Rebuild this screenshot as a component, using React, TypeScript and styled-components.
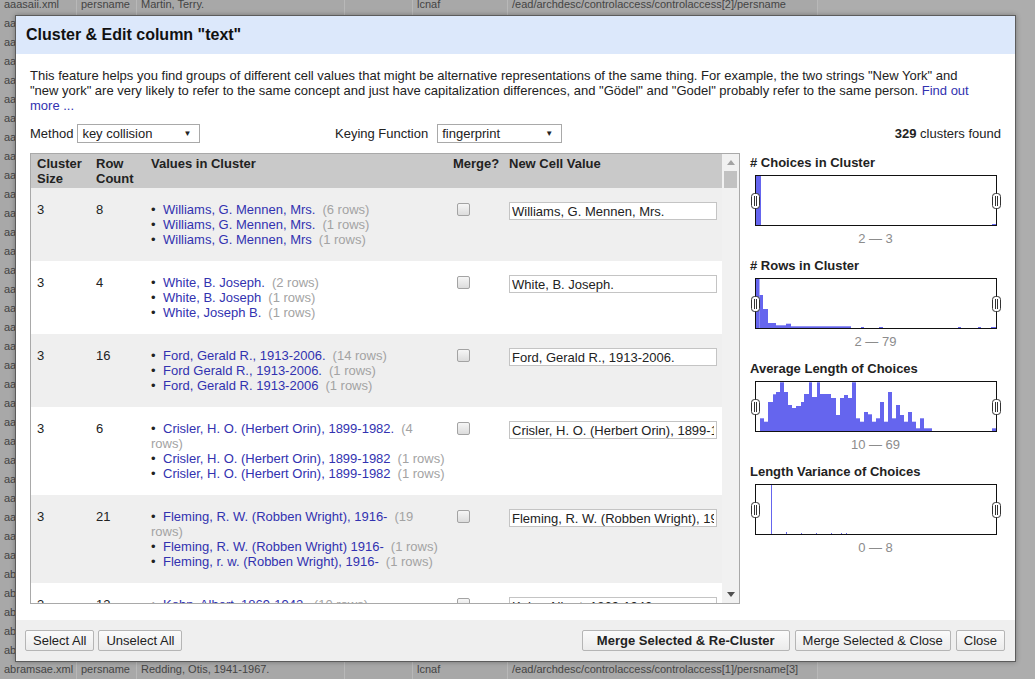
import React from 'react'
import styled, { createGlobalStyle } from 'styled-components'

const GlobalStyle = createGlobalStyle`
  body {
    margin: 0;
    font-family: "Liberation Sans", Arial, sans-serif;
    font-size: 13px;
  }
`

// ---- background grid behind the dialog ----

const bgPrefixes = [
  'aaasaii', 'aacraig', 'aaschen', 'aacoles', 'aatkins', 'aatwood',
  ...Array.from({ length: 20 }, (_, i) => 'aapitt' + (i + 1)),
  'aaspen', 'aasmith', 'aatley', 'aatrim', 'abelsm', 'abelson', 'abers', 'abeyta', 'abrams',
]

const bgRows = [
  ...bgPrefixes.map((p, i) => ({
    file: p + '.xml',
    tag: 'persname',
    name: i === 0 ? 'Martin, Terry.' : '',
    src: 'lcnaf',
    path: '/ead/archdesc/controlaccess/controlaccess[2]/persname',
  })),
  {
    file: 'abramsae.xml',
    tag: 'persname',
    name: 'Redding, Otis, 1941-1967.',
    src: 'lcnaf',
    path: '/ead/archdesc/controlaccess/controlaccess[1]/persname[3]',
  },
]

const Page = styled.div`
  position: relative;
  width: 1035px;
  height: 679px;
  overflow: hidden;
  background: #adadad;
`

const BgTable = styled.div`
  margin-top: -5px;
`

const BgRow = styled.div`
  display: grid;
  grid-template-columns: 77px 60px 208px 68px 95px 310px 1fr;
  height: 19px;
  line-height: 19px;
  font-size: 11px;
  color: #444;
`

const BgCell = styled.div<{ $blank?: boolean }>`
  padding-left: 4px;
  white-space: nowrap;
  overflow: hidden;
  background: ${(p) => (p.$blank ? 'transparent' : '#a8a8a8')};
  border-right: ${(p) => (p.$blank ? 'none' : '1px solid #b8b8b8')};
`

// ---- dialog ----

const Dialog = styled.div`
  position: absolute;
  left: 15px;
  top: 15px;
  width: 1001px;
  height: 647px;
  box-sizing: border-box;
  border: 1px solid #5c5c5c;
  background: #fff;
  display: flex;
  flex-direction: column;
  box-shadow: 0 0 5px rgba(0, 0, 0, 0.3);
  color: #222;
`

const TitleBar = styled.div`
  height: 38px;
  flex-shrink: 0;
  display: flex;
  align-items: center;
  padding-left: 10px;
  background: #dce8fb;
  font-size: 16px;
  font-weight: bold;
  color: #111;
`

const Body = styled.div`
  flex: 1;
  min-height: 0;
  display: flex;
  flex-direction: column;
  padding: 14px 14px 16px;
`

const Description = styled.p`
  margin: 0 13px 0 0;
  line-height: 15px;
`

const Link = styled.a`
  color: #3232b0;
  text-decoration: none;
  cursor: pointer;
`

const Controls = styled.div`
  margin-top: 11px;
  height: 19px;
  display: flex;
  align-items: center;
`

const ControlGroup = styled.div<{ $width?: number; $gap: number }>`
  display: flex;
  align-items: center;
  gap: ${(p) => p.$gap}px;
  width: ${(p) => (p.$width ? p.$width + 'px' : 'auto')};
`

const SelectBox = styled.div<{ $width: number }>`
  position: relative;
  width: ${(p) => p.$width}px;
  height: 19px;
  box-sizing: border-box;
  border: 1px solid #a9a9a9;
  background: #fff;
  display: flex;
  align-items: center;
  padding-left: 4px;
`

const SelectArrow = styled.span`
  position: absolute;
  right: 8px;
  top: 4px;
  font-size: 8px;
  line-height: 9px;
  color: #222;
`

const Found = styled.div`
  margin-left: auto;
  b {
    font-weight: bold;
  }
`

const Main = styled.div`
  margin-top: 10px;
  flex: 1;
  min-height: 0;
  display: flex;
  gap: 10px;
`

const TableBox = styled.div`
  width: 710px;
  box-sizing: border-box;
  border: 1px solid #a9a9a9;
  display: flex;
  overflow: hidden;
`

const TablePane = styled.div`
  flex: 1;
  overflow: hidden;
  display: flex;
  flex-direction: column;
`

const columns = '59px 55px 302px 56px 1fr'

const HeaderRow = styled.div`
  display: grid;
  grid-template-columns: ${columns};
  flex-shrink: 0;
  height: 34px;
  box-sizing: border-box;
  padding-top: 2px;
  background: #c9c9c9;
  font-weight: bold;
  line-height: 15px;
  color: #222;
`

const HeaderCell = styled.div`
  padding: 0 6px;
`

const ClusterRow = styled.div<{ $odd: boolean }>`
  display: grid;
  grid-template-columns: ${columns};
  flex-shrink: 0;
  padding: 14px 0;
  line-height: 15px;
  background: ${(p) => (p.$odd ? '#efefef' : '#fff')};
`

const Cell = styled.div<{ $right?: number }>`
  padding: 0 ${(p) => (p.$right ?? 6)}px 0 6px;
  min-width: 0;
`

const ValueList = styled.ul`
  margin: 0;
  padding: 0;
  list-style: none;
`

const ValueItem = styled.li`
  &::before {
    content: '•';
    display: inline-block;
    width: 12px;
    color: #222;
  }
`

const Count = styled.span`
  margin-left: 7px;
  color: #a3a3a3;
`

const MergeBox = styled.input`
  appearance: none;
  width: 13px;
  height: 13px;
  box-sizing: border-box;
  margin: 1px 0 0 4px;
  border: 1px solid #a3a3a3;
  border-radius: 2px;
  background: linear-gradient(#f6f6f6, #dcdcdc);
  display: block;
`

const NewValue = styled.input`
  width: 208px;
  height: 18px;
  box-sizing: border-box;
  margin: 0;
  padding: 0 2px;
  border: 1px solid #c4c4c4;
  font: inherit;
  color: #222;
  background: #fff;
`

const ScrollTrack = styled.div`
  width: 17px;
  flex-shrink: 0;
  background: #f1f1f1;
  display: flex;
  flex-direction: column;
`

const ScrollArrow = styled.div`
  height: 17px;
  display: flex;
  align-items: center;
  justify-content: center;
`

const ScrollThumb = styled.div`
  margin: 0 2px;
  height: 17px;
  background: #c1c1c1;
`

const ScrollSpace = styled.div`
  flex: 1;
`

const SidePanel = styled.div`
  flex: 1;
  display: flex;
  flex-direction: column;
  padding-top: 2px;
`

const ChartTitle = styled.div`
  font-weight: bold;
  line-height: 15px;
  color: #222;
`

const ChartBox = styled.div`
  position: relative;
  margin: 5px auto 0;
  width: 242px;
  height: 51px;
  box-sizing: border-box;
  border: 1px solid #111;
  background: #fff;
`

const Handle = styled.svg<{ $side: 'left' | 'right' }>`
  position: absolute;
  top: 50%;
  transform: translateY(-50%);
  ${(p) => p.$side}: -5px;
`

const ChartRange = styled.div`
  margin: 5px 0 12px;
  line-height: 15px;
  text-align: center;
  color: #8c8c8c;
`

const Footer = styled.div`
  height: 41px;
  flex-shrink: 0;
  display: flex;
  align-items: center;
  justify-content: space-between;
  padding: 0 10px 0 9px;
  background: #efefef;
`

const ButtonGroup = styled.div<{ $gap: number }>`
  display: flex;
  gap: ${(p) => p.$gap}px;
`

const Button = styled.button<{ $primary?: boolean }>`
  height: 21px;
  padding: 0 ${(p) => (p.$primary ? 14 : 7)}px;
  font-family: inherit;
  font-size: 13px;
  font-weight: ${(p) => (p.$primary ? 'bold' : 'normal')};
  color: #222;
  border: 1px solid #b5b5b5;
  border-radius: 2px;
  background: linear-gradient(#fbfbfb, #ebebeb);
`

// ---- data ----

type Value = { text: string; rows: number }
type Cluster = { size: number; count: number; values: Value[]; merged: string }

const clusters: Cluster[] = [
  {
    size: 3, count: 8, merged: 'Williams, G. Mennen, Mrs.',
    values: [
      { text: 'Williams, G. Mennen, Mrs.', rows: 6 },
      { text: 'Williams, G. Mennen, Mrs.', rows: 1 },
      { text: 'Williams, G. Mennen, Mrs', rows: 1 },
    ],
  },
  {
    size: 3, count: 4, merged: 'White, B. Joseph.',
    values: [
      { text: 'White, B. Joseph.', rows: 2 },
      { text: 'White, B. Joseph', rows: 1 },
      { text: 'White, Joseph B.', rows: 1 },
    ],
  },
  {
    size: 3, count: 16, merged: 'Ford, Gerald R., 1913-2006.',
    values: [
      { text: 'Ford, Gerald R., 1913-2006.', rows: 14 },
      { text: 'Ford Gerald R., 1913-2006.', rows: 1 },
      { text: 'Ford, Gerald R. 1913-2006', rows: 1 },
    ],
  },
  {
    size: 3, count: 6, merged: 'Crisler, H. O. (Herbert Orin), 1899-1982.',
    values: [
      { text: 'Crisler, H. O. (Herbert Orin), 1899-1982.', rows: 4 },
      { text: 'Crisler, H. O. (Herbert Orin), 1899-1982', rows: 1 },
      { text: 'Crisler, H. O. (Herbert Orin), 1899-1982', rows: 1 },
    ],
  },
  {
    size: 3, count: 21, merged: 'Fleming, R. W. (Robben Wright), 1916-',
    values: [
      { text: 'Fleming, R. W. (Robben Wright), 1916-', rows: 19 },
      { text: 'Fleming, R. W. (Robben Wright) 1916-', rows: 1 },
      { text: 'Fleming, r. w. (Robben Wright), 1916-', rows: 1 },
    ],
  },
  {
    size: 3, count: 12, merged: 'Kohn, Albert, 1869-1942.',
    values: [
      { text: 'Kohn, Albert, 1869-1942.', rows: 10 },
      { text: 'Kohn, Albert 1869-1942.', rows: 1 },
      { text: 'Kohn, Albert, 1869-1942', rows: 1 },
    ],
  },
]

// bars: [x, width, height] in a 240x49 box
type Bar = [number, number, number]

const charts: { title: string; range: string; bars: Bar[] }[] = [
  {
    title: '# Choices in Cluster',
    range: '2 — 3',
    bars: [[0, 5, 49], [236, 4, 1]],
  },
  {
    title: '# Rows in Cluster',
    range: '2 — 79',
    bars: [
      [0, 3.5, 49], [3.5, 3.5, 33], [7, 5, 19], [12, 8, 5], [20, 10, 2.7], [30, 5, 4.3],
      [35, 60, 1.7], [105, 3, 1], [123, 4, 1], [202, 3, 1], [222, 3, 1], [235, 5, 1],
    ],
  },
  {
    title: 'Average Length of Choices',
    range: '10 — 69',
    bars: [
      [4, 4, 12.7], [8, 4, 9.3], [12, 5, 29], [17, 3, 36.7], [20, 4, 39], [24, 4, 48.7],
      [28, 4, 39], [32, 4, 26], [36, 4, 23], [40, 5, 25], [45, 3, 29], [48, 5, 37],
      [53, 3, 48.7], [56, 5, 34], [61, 3, 48.7], [64, 11, 37], [75, 5, 33], [80, 4, 16],
      [84, 4, 33], [88, 4, 36], [92, 4, 33], [96, 4, 48.7], [100, 4, 12.7], [104, 4, 9.3],
      [108, 4, 19], [112, 4, 16.7], [116, 4, 9.3], [120, 4, 12.7], [124, 4, 29], [128, 4, 9.3],
      [132, 4, 39], [136, 4, 12.7], [140, 4, 26], [144, 4, 16], [148, 4, 9.3], [152, 4, 19],
      [156, 4, 9.3], [160, 4, 2.7], [164, 4, 12.7], [168, 8, 2.7], [236, 4, 2.7],
    ],
  },
  {
    title: 'Length Variance of Choices',
    range: '0 — 8',
    bars: [[15, 1, 49], [30, 1, 2], [45, 1, 1], [60, 1, 1], [75, 1, 1], [85, 1, 1], [90, 1, 1]],
  },
]

const HandleIcon = ({ side }: { side: 'left' | 'right' }) => (
  <Handle $side={side} width="9" height="16" viewBox="0 0 9 16">
    <rect x="0.5" y="0.5" width="8" height="15" rx="3" fill="#fff" stroke="#333" />
    <line x1="3.5" y1="3" x2="3.5" y2="13" stroke="#333" />
    <line x1="5.5" y1="3" x2="5.5" y2="13" stroke="#333" />
  </Handle>
)

const Histogram = ({ title, range, bars }: { title: string; range: string; bars: Bar[] }) => (
  <div>
    <ChartTitle>{title}</ChartTitle>
    <ChartBox>
      <svg width="240" height="49" viewBox="0 0 240 49" preserveAspectRatio="none" style={{ display: 'block' }}>
        {bars.map(([x, w, h], i) => (
          <rect key={i} x={x} y={49 - h} width={w} height={h} fill="#6565ee" />
        ))}
      </svg>
      <HandleIcon side="left" />
      <HandleIcon side="right" />
    </ChartBox>
    <ChartRange>{range}</ChartRange>
  </div>
)

const App = () => {
  return (
    <Page>
      <GlobalStyle />
      <BgTable>
        {bgRows.map((r, i) => (
          <BgRow key={i}>
            <BgCell>{r.file}</BgCell>
            <BgCell>{r.tag}</BgCell>
            <BgCell>{r.name}</BgCell>
            <BgCell />
            <BgCell>{r.src}</BgCell>
            <BgCell>{r.path}</BgCell>
            <BgCell $blank />
          </BgRow>
        ))}
      </BgTable>

      <Dialog>
        <TitleBar>Cluster &amp; Edit column "text"</TitleBar>
        <Body>
          <Description>
            This feature helps you find groups of different cell values that might be alternative
            representations of the same thing. For example, the two strings "New York" and "new
            york" are very likely to refer to the same concept and just have capitalization
            differences, and "Gödel" and "Godel" probably refer to the same person.{' '}
            <Link>Find out more ...</Link>
          </Description>

          <Controls>
            <ControlGroup $width={305} $gap={4}>
              Method
              <SelectBox $width={123}>
                key collision
                <SelectArrow>▼</SelectArrow>
              </SelectBox>
            </ControlGroup>
            <ControlGroup $gap={9}>
              Keying Function
              <SelectBox $width={125}>
                fingerprint
                <SelectArrow>▼</SelectArrow>
              </SelectBox>
            </ControlGroup>
            <Found>
              <b>329</b> clusters found
            </Found>
          </Controls>

          <Main>
            <TableBox>
              <TablePane>
                <HeaderRow>
                  <HeaderCell>Cluster Size</HeaderCell>
                  <HeaderCell>Row Count</HeaderCell>
                  <HeaderCell>Values in Cluster</HeaderCell>
                  <HeaderCell>Merge?</HeaderCell>
                  <HeaderCell>New Cell Value</HeaderCell>
                </HeaderRow>
                {clusters.map((c, i) => (
                  <ClusterRow key={i} $odd={i % 2 === 0}>
                    <Cell>{c.size}</Cell>
                    <Cell>{c.count}</Cell>
                    <Cell $right={2}>
                      <ValueList>
                        {c.values.map((v, j) => (
                          <ValueItem key={j}>
                            <Link>{v.text}</Link>
                            <Count>({v.rows} rows)</Count>
                          </ValueItem>
                        ))}
                      </ValueList>
                    </Cell>
                    <Cell>
                      <MergeBox type="checkbox" />
                    </Cell>
                    <Cell>
                      <NewValue type="text" defaultValue={c.merged} />
                    </Cell>
                  </ClusterRow>
                ))}
              </TablePane>
              <ScrollTrack>
                <ScrollArrow>
                  <svg width="8" height="5" viewBox="0 0 8 5">
                    <polygon points="0,5 8,5 4,0" fill="#a3a3a3" />
                  </svg>
                </ScrollArrow>
                <ScrollThumb />
                <ScrollSpace />
                <ScrollArrow>
                  <svg width="8" height="5" viewBox="0 0 8 5">
                    <polygon points="0,0 8,0 4,5" fill="#505050" />
                  </svg>
                </ScrollArrow>
              </ScrollTrack>
            </TableBox>

            <SidePanel>
              {charts.map((ch) => (
                <Histogram key={ch.title} title={ch.title} range={ch.range} bars={ch.bars} />
              ))}
            </SidePanel>
          </Main>
        </Body>

        <Footer>
          <ButtonGroup $gap={4}>
            <Button>Select All</Button>
            <Button>Unselect All</Button>
          </ButtonGroup>
          <ButtonGroup $gap={5}>
            <Button $primary>Merge Selected &amp; Re-Cluster</Button>
            <Button>Merge Selected &amp; Close</Button>
            <Button>Close</Button>
          </ButtonGroup>
        </Footer>
      </Dialog>
    </Page>
  )
}

export default App
